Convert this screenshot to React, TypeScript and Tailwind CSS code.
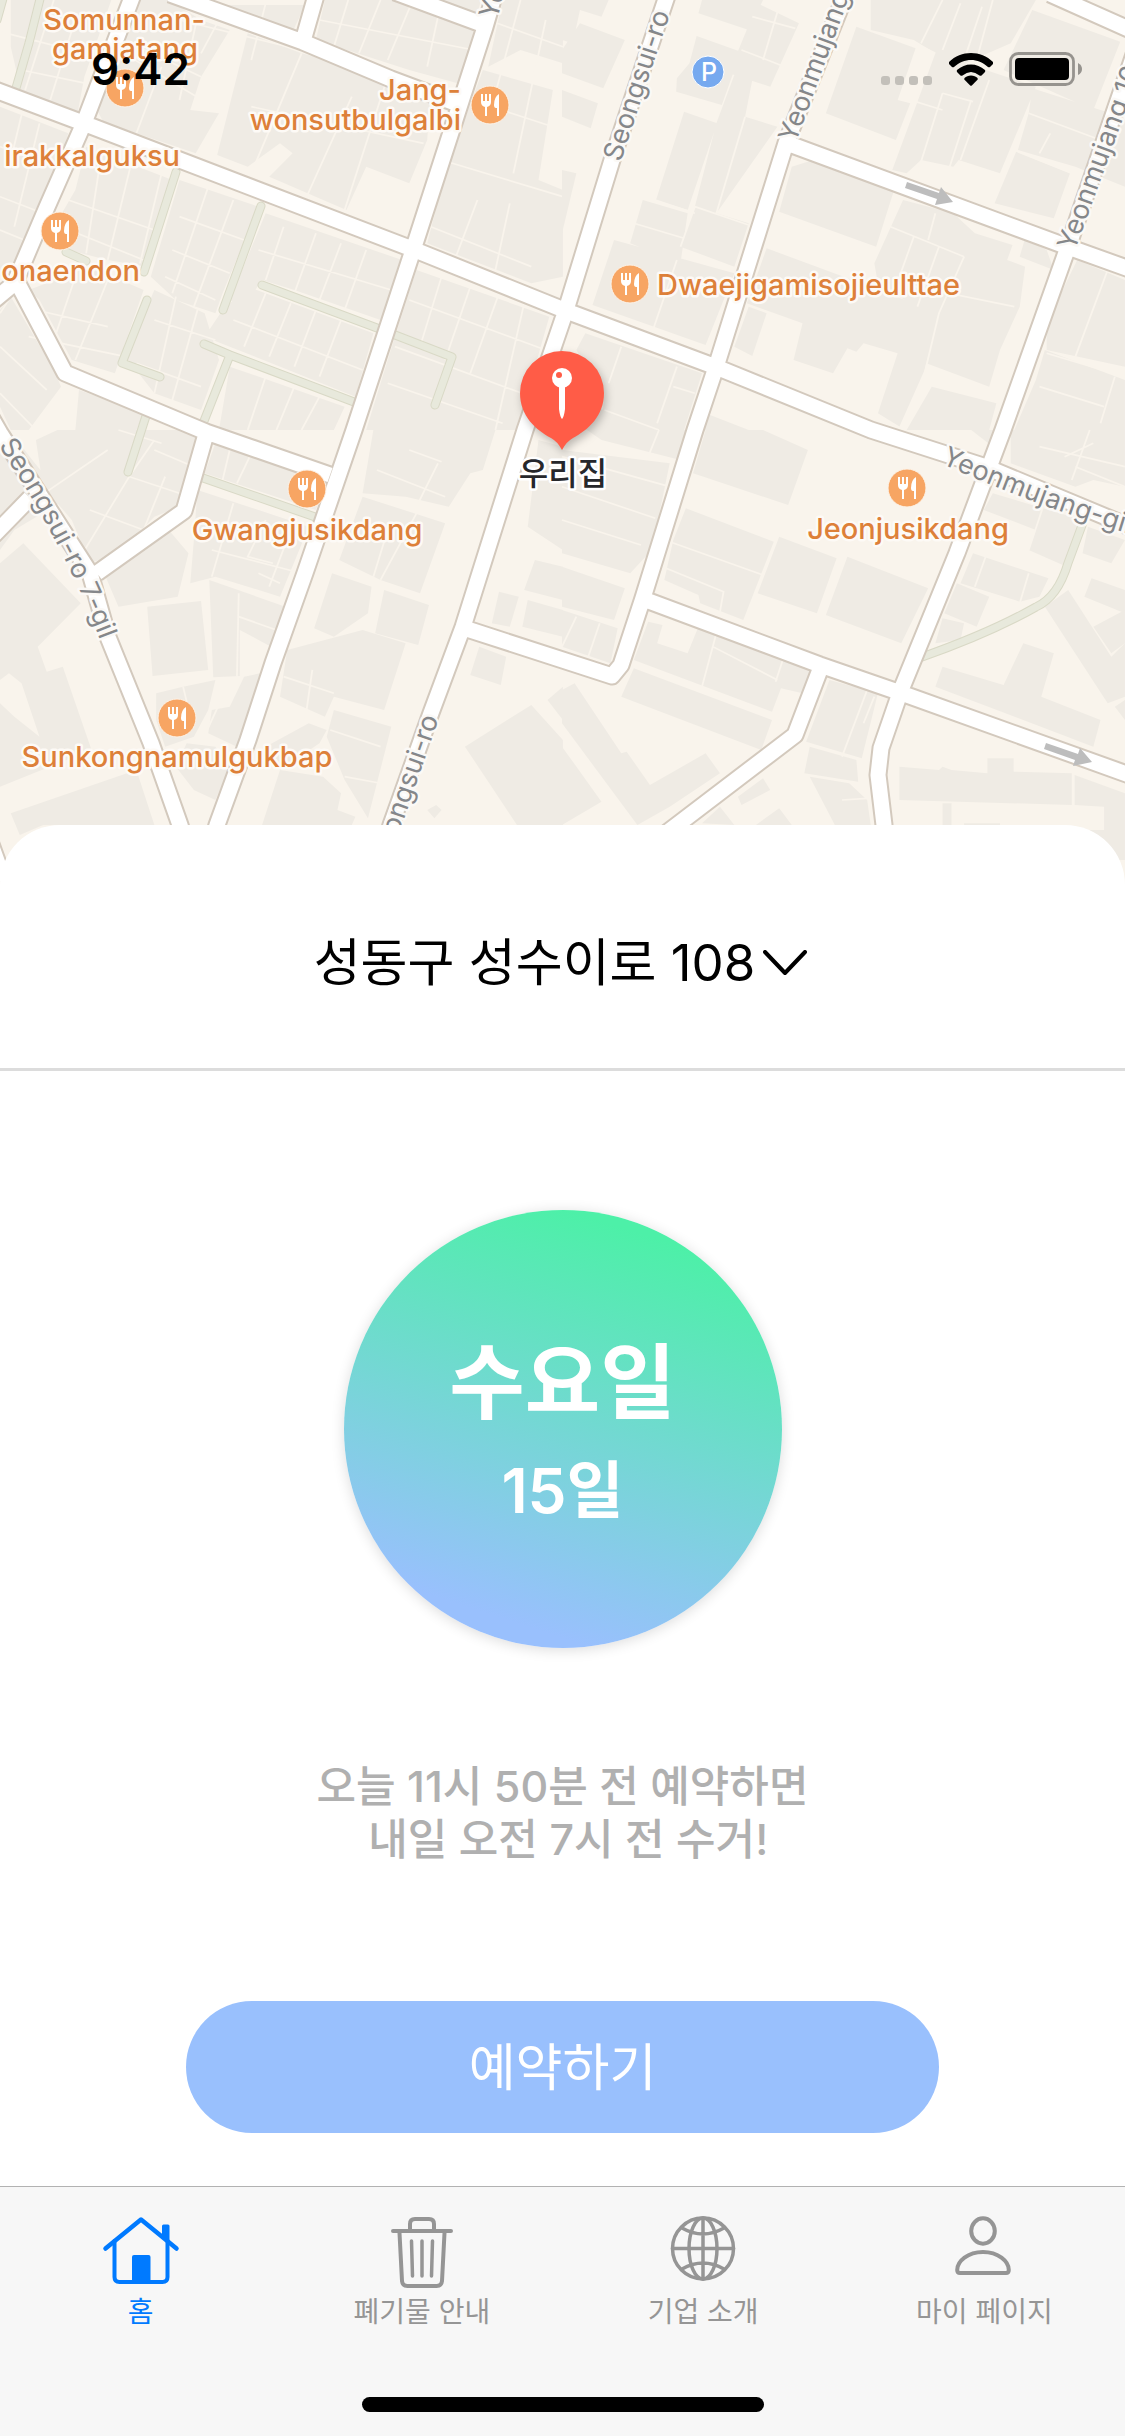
import type { ReactNode } from 'react';

/* ---------- map data ---------- */

const ROADS = [
  'M-10 88 L83 123 L415 250 L569 312 L716 367 L871 430 L986 467 L1135 529',
  'M170 -6 L303 42 L391 79 L463 106',
  'M317 -8 L303 41',
  'M395 -8 L487 26',
  'M497 -14 L485 27 L413 250 L354 430 L305 573 L273 663 L248 740 L217 825 L198 890',
  'M134 -8 L131 0 L84 123 L47 207 L16 280 L65 373 L206 432 L330 475',
  'M16 282 L-8 302',
  'M206 434 L184 511 L97 573',
  'M-12 412 L0 433 L90 573 L108 637 L151 743 L180 825 L200 890',
  'M30 498 L-10 539',
  'M669 -10 L612 160 L566 310 L525 430 L463 627 L431 713 L391 825 L372 890',
  'M849 -14 L786 143 L716 367 L695 430 L643 598 L621 665 L612 676 L467 629',
  'M792 145 L1068 247 L1135 271',
  'M1050 -6 L1135 32',
  'M1150 8 L1068 247 L1003 430 L957 553 L901 690 L881 748 L878 775 L884 825 L890 890',
  'M646 600 L820 665 L901 693 L1135 777',
  'M821 667 L795 735 L677 825 L610 876',
  'M-12 836 L4 880',
];

const ALLEYS = [
  'M41 -5 L29 43 L16 88',
  'M4 -5 L-3 20',
  'M176 172 L144 272',
  'M261 206 L223 310',
  'M262 285 L377 328 L452 357 L435 405',
  'M204 344 L230 355 L354 402',
  'M230 355 L204 421',
  'M147 300 L122 363 L160 377',
  'M66 252 L86 261',
  'M146 416 L128 472',
  'M203 478 L318 518',
  'M1084 520 L1068 563 Q1058 597 1036 607 Q990 633 922 657',
];

const BLOCKS_NW = [
  'M30 0H310L235 230L215 345L60 280L30 140Z',
  'M0 320L190 400L170 480L60 760L0 830V560Z',
  'M385 0H470L560 60L640 90L560 230L530 330L610 340L545 460L380 400L290 370L270 330Z',
  'M500 15H850L815 95Z',
  'M905 0H1340L1320 80L1310 260L1140 210L880 120Z',
  'M690 100L840 160L1200 260L1190 420L1140 550L1020 500L965 630L750 530L815 460L780 430L690 500L605 465Z',
  'M1400 0H1568V190L1450 150L1360 200Z',
  'M1345 210L1540 270L1500 540L1568 570V830L1480 850L1190 730L1240 520Z',
  'M240 440L480 540L445 630L410 800L300 780L190 750L140 700L210 570Z',
  'M500 540L720 620L620 880L600 940L490 900L420 830Z',
  'M740 640L1120 780L1060 960L820 870L730 840L680 920L640 900Z',
  'M690 860L1040 1000L990 1190L640 1040L570 1010L620 930Z',
  'M80 870L250 800L400 870L320 1120L200 1080L110 900Z',
  'M430 870L570 940L610 1080L560 1230L430 1180L350 1070Z',
  'M1160 810L1530 950L1440 1290H1020L1100 1010Z',
  'M0 930L30 890L150 1110L170 1160L80 1290H30L0 1220Z',
  'M640 1100L960 1220L930 1290H610Z',
  'M220 1170L400 1240L380 1290H210Z',
];

const GAPS_NW = [
  'M70 270L150 0M140 300L215 40M60 210L240 250M0 95L270 170',
  'M0 440L150 500M0 590L120 640M0 690L90 730M60 345L30 480M110 370L40 680',
  'M560 0L500 300M385 140L560 230M360 170L610 330M450 200L380 400',
  'M500 60L840 150M640 0L560 160M740 10L700 180M970 0L930 140M1060 0L1000 160M1150 0L1080 180M1230 0L1190 200M890 60L1320 150',
  'M840 160L700 520M980 290L850 600M1080 230L960 630M700 320L1180 430',
  'M1450 0L1370 320M1360 60L1568 140M1340 310L1568 390M1520 60L1430 520M1230 480L1568 590M1330 600L1270 770M1420 610L1380 810M1200 680L1480 800',
  'M290 410L240 760M370 470L300 780M450 520L390 790M190 600L430 690M170 680L400 780',
  'M580 560L480 880M650 600L540 920M500 650L680 720M480 750L640 820M460 830L600 900',
  'M880 700L820 880M950 730L890 900M1020 750L960 930M720 750L1090 870M790 680L740 840',
  'M740 880L680 1040M810 910L750 1070M880 930L820 1100M950 960L890 1130M650 960L1010 1110',
  'M100 930L300 980M80 1010L350 1070M210 830L150 1020M300 840L210 1080',
  'M430 960L600 1020M490 890L430 1180M550 930L480 1200M380 1090L560 1160',
  'M1230 830L1170 1040M1310 860L1240 1080M1390 880L1310 1120M1460 910L1380 1290M1140 900L1520 1050M1100 1040L1480 1190M1080 1150L1400 1270',
  'M0 1040L130 1170M0 1180L100 1290M30 890L0 940',
  'M740 1130L690 1290M820 1160L770 1290M890 1190L840 1290',
];

const BLOCKS_NE = [
  'M0 0H130L110 50L50 30L30 130L0 120ZM50 70L175 120L115 265L0 220V150Z',
  'M390 0H560L520 90L380 40ZM545 10L660 70L580 260L465 220Z',
  'M375 108L498 155L445 315L318 275L320 235L355 190Z',
  'M340 335L432 370L350 630L262 600ZM480 225L530 240L510 350L600 380L430 640L520 670L480 800L330 740L370 620L430 370Z',
  'M225 600L350 640L330 790L190 730Z',
  'M145 720L480 820L400 1035L85 915Z',
  'M0 270L100 310L80 385L0 350ZM0 510L40 520L0 700Z',
  'M820 80L985 145L935 300L970 310L930 420L735 340Z',
  'M860 0H1320L1250 130L1100 200L980 120L860 90Z',
  'M1040 160L1320 260L1220 520L1105 480L1090 500L1000 480L960 520L920 510Z',
  'M1310 30L1555 125L1480 330L1230 210Z',
  'M1310 265L1500 330L1568 350V560L1430 500L1270 450L1300 340Z',
  'M1265 455L1415 520L1370 655L1205 610Z',
  'M700 480L925 570L875 740L605 635L640 500Z',
  'M950 600L1090 640L1150 700L1255 735L1240 780L1290 800L1275 920L1220 1050L1190 1160L1015 1090L1045 960L880 850L870 790Z',
  'M570 745L860 860L1050 940L1010 1110L940 1280L880 1240L935 1060L840 1030L820 1055L795 1045L755 1120L645 1080L670 970L515 910Z',
  'M520 920L570 940L530 1068L480 1040Z',
  'M65 1000L390 1120L340 1290H110L118 1180L40 1050Z',
  'M1290 715L1350 750L1370 810L1275 770Z',
  'M1435 780L1568 840V1100L1350 1050L1350 970Z',
  'M1345 1050L1568 1140V1290H1260L1320 1140Z',
  'M1030 1160L1210 1210L1190 1290H960Z',
  'M0 1200L280 1270V1290H0Z',
  'M400 1240L520 1290H390Z',
];

const GAPS_NE = [
  'M530 50L650 85M500 150L620 200M610 0L560 180',
  'M370 620L520 675M370 620L330 740M200 670L340 715M320 780L255 985M510 350L430 640M260 600L370 640',
  'M985 130L1040 160M1060 0L1000 130M1110 10L1060 150M1170 20L1120 180M1200 0L1150 200',
  'M1060 280L990 520M1140 300L1080 500M1190 240L1110 480M1060 280L1145 305M940 290L1060 330',
  'M1270 455L1420 520M1300 340L1500 420M1360 400L1330 460',
  'M915 680L1120 770M980 710L920 890M1050 740L990 920M1120 770L1050 940M1050 940L1010 1120M940 850L1260 920M1040 640L1020 720',
  'M165 1040L130 1150M320 1100L265 1270M118 1230L270 1290M310 1160L370 1180',
  'M1520 810L1430 1070M1540 1130L1500 1270M1330 1160L1510 1220M1350 1060L1568 1130',
];

const BLOCKS_SW = [
  'M100 30L160 0H500L560 20L500 230L430 260L330 370L250 400L200 270L120 170Z',
  'M0 60L40 20L90 90L180 210L40 300L0 360Z',
  'M65 340L225 520L105 650L130 725L175 710L255 960L0 1070V820L40 860L110 920L60 760L25 730L0 750V400Z',
  'M600 40L910 140L880 240L570 130Z',
  'M550 180L860 290L780 500L600 440L530 460L540 330Z',
  'M470 300L525 370L495 500L330 530L290 430Z',
  'M410 530L560 513L580 720L425 738ZM583 450L795 530L755 650L668 600V738L594 742Z',
  'M435 790L510 770L600 750L580 840L540 920L460 950L435 870Z',
  'M640 830L680 740L725 730L660 950L580 910L590 840Z',
  'M30 1150L380 1020L430 1185H120L55 1215Z',
  'M1040 0H1380L1345 120L1310 130L1250 230L1130 200L1010 190Z',
  'M1010 200L1240 280L1170 490L1060 450L945 390Z',
  'M925 430L1035 470L1025 550L930 620L875 595ZM1070 480L1195 525L1165 645L1045 610Z',
  'M1010 600L1130 640L1070 840L930 800L905 860L780 800L800 660Z',
  'M930 840L1090 890L1025 1165L960 1050L910 920Z',
  'M780 1020L900 1040L950 1090L940 1140L990 1160L980 1185H730Z',
  'M860 880L910 900L890 940L780 1020L740 950Z',
  'M1480 825L1568 930V1185H1440L1295 950ZM1568 770L1525 810L1568 870Z',
  'M1335 650L1410 680L1395 765L1310 735Z',
  'M1500 30L1568 50V510L1460 480L1490 390L1568 410V360L1470 290Z',
  'M1390 485L1445 500L1420 590L1370 580ZM1470 510L1568 540V620L1455 590Z',
  'M520 940L600 950L640 1010L600 1110L540 1080L490 1010Z',
  'M1215 1125L1230 1140L1210 1165L1190 1140Z',
];

const GAPS_SW = [
  'M300 60L110 200M360 140L230 370M430 30L360 140L500 190M430 60L540 110M330 0L450 40M250 240L400 300M460 140L400 300',
  'M700 70L660 160M640 60L620 150M590 360L840 430M740 270L690 380L760 400M650 220L590 440M720 430L780 460M810 300L750 470',
  'M665 560L770 600M665 490L660 740M620 800L560 940M510 770L530 860',
  'M1220 100L1160 230M1140 60L1230 95M1080 300L1040 440M1160 250L1060 450M1050 120L1240 200',
  'M960 1040L1060 1060M920 900L1060 950M790 740L930 790M870 720L850 870',
];

const BLOCKS_SE = [
  'M0 60L300 100L250 360L190 430L0 370Z',
  'M0 410L175 475L145 570L0 530ZM0 540L155 595L135 700L0 650Z',
  'M70 0H345L330 90L110 30ZM400 0H560L685 60L630 225L365 130Z',
  'M345 235L590 335L505 570L385 520L380 495L285 450L310 330Z',
  'M605 320L765 385L710 550L545 490ZM795 380L1020 475L945 640L735 555Z',
  'M240 575L280 585L265 640L350 670L380 590L430 610L695 715L670 790L610 775L585 845L200 690Z',
  'M200 715L585 870L555 960L165 800Z',
  'M745 750L880 790L835 985L680 935Z',
  'M690 950L820 990L825 1055L675 1030ZM690 1040L800 1060L850 1110L860 1185H760Z',
  'M35 760L165 970L180 965L245 1065L400 970L440 1030L300 1130L210 1185L0 880V780Z',
  'M0 950L110 1115L0 1185Z',
  'M1140 0H1240L1200 50ZM1250 0H1568V170L1480 150L1430 170L1250 100Z',
  'M1200 190L1450 270L1395 405L1300 360L1320 300L1175 240Z',
  'M1145 370L1355 445L1330 500L1275 515L1110 460ZM1100 460L1190 500L1155 590L1065 550ZM1060 565L1120 580L1110 630L1040 640Z',
  'M1060 710L1230 765L1285 640L1370 670L1335 800L1500 870L1480 950L1040 770Z',
  'M1410 480L1530 680L1568 640V800L1520 820L1345 530Z',
  'M1475 445L1568 480V550L1455 500ZM1465 290L1568 330L1530 400L1450 370Z',
  'M1480 590L1568 540V640L1530 670ZM1540 830L1568 810V870Z',
  'M940 1010L1050 1020L1060 1010L1085 1020L1185 1030V985H1258V1025L1420 1030V1125L940 1110Z',
  'M1428 1035L1568 1090V1290H1510V1130L1428 1125ZM1060 1120H1085V1185H1060Z',
  'M490 1100L560 1045L580 1080L500 1125ZM390 1180L440 1130L480 1185ZM540 1185L605 1135L640 1185Z',
  'M1120 1180H1220V1185H1120ZM1470 1200H1568V1290H1540Z',
];

const GAPS_SE = [
  'M0 170L260 265M0 270L220 345M270 0L240 80M0 80L300 170',
  'M300 335L560 435M290 415L450 485L440 545M420 650L600 750M430 610L390 770M615 690L595 755M40 560L0 650M105 580L70 690',
  'M850 780L780 980M870 800L840 880M1180 380L1150 470M1300 430L1275 520M780 1110L850 1105M1340 230L1300 360',
  'M1470 0L1420 150M1430 110L1568 170M1330 50L1568 110M1480 40L1400 80',
];

const POIS = [
  { x: 125, y: 88 }, { x: 490, y: 105 }, { x: 60, y: 231 }, { x: 630, y: 284 },
  { x: 307, y: 489 }, { x: 177, y: 718 }, { x: 907, y: 488 },
];

const POI_LABELS: { text: string; x: number; y: number; anchor: 'start' | 'middle' | 'end' }[] = [
  { text: 'Somunnan-', x: 124, y: 30, anchor: 'middle' },
  { text: 'gamjatang', x: 125, y: 59, anchor: 'middle' },
  { text: 'irakkalguksu', x: 180, y: 166, anchor: 'end' },
  { text: 'onaendon', x: 140, y: 281, anchor: 'end' },
  { text: 'Jang-', x: 461, y: 100, anchor: 'end' },
  { text: 'wonsutbulgalbi', x: 461, y: 130, anchor: 'end' },
  { text: 'Dwaejigamisojieulttae', x: 657, y: 295, anchor: 'start' },
  { text: 'Gwangjusikdang', x: 307, y: 540, anchor: 'middle' },
  { text: 'Sunkongnamulgukbap', x: 177, y: 767, anchor: 'middle' },
  { text: 'Jeonjusikdang', x: 908, y: 539, anchor: 'middle' },
];

const STREETS = [
  { id: 'st-1', text: 'Seongsui-ro', d: 'M613 160 L674 -24' },
  { id: 'st-2', text: 'Yeonmujang', d: 'M788 141 L880 -110' },
  { id: 'st-3', text: 'Yeonmujang 10-gil', d: 'M1067 249 L1152 16' },
  { id: 'st-4', text: 'Yeonmujang-gil', d: 'M489 18 L542 -160' },
  { id: 'st-5', text: 'Yeonmujang-gil', d: 'M944 456 Q1060 508 1180 540' },
  { id: 'st-6', text: 'Seongsui-ro 7-gil', d: 'M5 441 Q94 575 128 700' },
  { id: 'st-7', text: 'Seongsui-ro', d: 'M380 864 L442 685' },
];

function Tile({ x, y, blocks, gaps }: { x: number; y: number; blocks: string[]; gaps: string[] }) {
  return (
    <g transform={`translate(${x} ${y}) scale(0.359 0.3333)`}>
      <path d={blocks.join('')} fill="#efebe4" />
      <path d={gaps.join('')} fill="none" stroke="#f9f4ec" strokeWidth="5" />
    </g>
  );
}

function CityMap() {
  return (
    <svg
      viewBox="0 0 1125 885"
      preserveAspectRatio="xMidYMid slice"
      className="block h-[885px] w-full bg-[#f9f4ec]"
      role="img"
      aria-label="지도"
    >
      <Tile x={0} y={0} blocks={BLOCKS_NW} gaps={GAPS_NW} />
      <Tile x={562} y={0} blocks={BLOCKS_NE} gaps={GAPS_NE} />
      <Tile x={0} y={430} blocks={BLOCKS_SW} gaps={GAPS_SW} />
      <Tile x={562} y={430} blocks={BLOCKS_SE} gaps={GAPS_SE} />

      <g fill="none" strokeLinecap="round" strokeLinejoin="round">
        <path d={ALLEYS.join('')} stroke="#d9d9c6" strokeWidth="9" />
        <path d={ALLEYS.join('')} stroke="#e8e9dc" strokeWidth="7" />
      </g>
      <g fill="none" strokeLinejoin="round">
        <path d={ROADS.join('')} stroke="#d3c9bd" strokeWidth="19" />
        <path d={ROADS.join('')} stroke="#ffffff" strokeWidth="15" />
      </g>

      <g fill="#bdbdbd">
        <path d="M907 182L939 193L941 187L953 202L935 205L937 199L905 188Z" />
        <path d="M1046 743L1078 754L1080 748L1092 762L1073 766L1075 760L1044 749Z" />
      </g>

      <g
        fill="#85878a"
        stroke="#fbf9f6"
        strokeWidth="5"
        strokeLinejoin="round"
        paintOrder="stroke"
        className="text-[27px]"
      >
        {STREETS.map((s) => (
          <g key={s.id}>
            <path id={s.id} d={s.d} fill="none" stroke="none" />
            <text dy="8">
              <textPath href={`#${s.id}`}>{s.text}</textPath>
            </text>
          </g>
        ))}
      </g>

      {POIS.map((p) => (
        <g key={`${p.x}-${p.y}`} transform={`translate(${p.x} ${p.y})`}>
          <circle r="19" fill="#f7a563" stroke="#fdf3e8" strokeWidth="1" />
          <path
            d="M-9 -11V-3Q-9 1 -5 2V11H-3V2Q1 1 1 -3V-11H-1V-4H-3V-11H-5V-4H-7V-11ZM9 -11Q4 -8 4 0Q4 3 6 3H7V11H9Z"
            fill="#fff"
          />
        </g>
      ))}
      <circle cx="708" cy="72" r="16" fill="#76a9ef" stroke="#fff" strokeWidth="1" />
      <text x="709" y="81" textAnchor="middle" fill="#fff" className="text-[25px] font-medium">P</text>

      <g
        fill="#dd8039"
        stroke="#fdfaf6"
        strokeWidth="5"
        strokeLinejoin="round"
        paintOrder="stroke"
        className="text-[29px] font-medium"
      >
        {POI_LABELS.map((l) => (
          <text key={l.text} x={l.x} y={l.y} textAnchor={l.anchor}>{l.text}</text>
        ))}
      </g>

      <g>
        <path
          d="M562 351A42 42 0 0 1 604 393C604 416 588 430 573 438Q567 441 562 450Q557 441 551 438C536 430 520 416 520 393A42 42 0 0 1 562 351Z"
          fill="#ff5c47"
          className="drop-shadow-[2px_4px_4px_rgba(0,0,0,0.25)]"
        />
        <path d="M559 386H565V409Q564 417 562 419Q560 417 559 409Z" fill="#fff" />
        <circle cx="562" cy="378" r="10" fill="#fff" />
        <circle cx="559" cy="375" r="3" fill="#ff5c47" />
        <text
          x="563"
          y="485"
          textAnchor="middle"
          fill="#26272b"
          stroke="#fff"
          strokeWidth="5"
          strokeLinejoin="round"
          paintOrder="stroke"
          className="text-[32px] font-medium"
        >
          우리집
        </text>
      </g>
    </svg>
  );
}

/* ---------- status bar ---------- */

function StatusBar() {
  return (
    <div className="absolute inset-x-0 top-0 flex h-[138px] items-center justify-between pr-[43px] pl-[91px]">
      <time className="text-[44px] leading-none font-semibold text-black">9:42</time>
      <div className="flex items-center gap-4">
        <svg viewBox="0 0 52 34" className="h-[34px] w-[52px]" fill="#c3c0ba" aria-hidden="true">
          <rect x="0" y="24" width="9" height="9" rx="3" />
          <rect x="14" y="24" width="9" height="9" rx="3" />
          <rect x="28" y="24" width="9" height="9" rx="3" />
          <rect x="42" y="24" width="9" height="9" rx="3" />
        </svg>
        <svg viewBox="0 0 44 33" className="h-[33px] w-11" aria-label="Wi-Fi">
          <path d="M22 0C30 0 38 3 44 9Q44.500 10 44 11L41 14Q40 14.500 39 14C34 9.500 28 7 22 7S10 9.500 5 14Q4 14.500 3 14L0 11Q-0.500 10 0 9C6 3 14 0 22 0Z" />
          <path d="M22 11.500C27 11.500 32 13.500 36 17Q36.500 18 36 19L32.500 22.500Q31.500 23 30.500 22.500Q22 15.500 13.500 22.500Q12.500 23 11.500 22.500L8 19Q7.500 18 8 17C12 13.500 17 11.500 22 11.500Z" />
          <path d="M22 22.500C24.500 22.500 27 23.500 28.500 25Q29 26 28.500 26.800L22.800 32.500Q22 33 21.200 32.500L15.500 26.800Q15 26 15.500 25C17 23.500 19.500 22.500 22 22.500Z" />
        </svg>
        <svg viewBox="0 0 73 34" className="h-[34px] w-[73px]" aria-label="배터리">
          <rect x="1.500" y="1.500" width="63" height="31" rx="8" fill="none" stroke="#96938e" strokeWidth="2.800" />
          <rect x="6" y="6" width="54" height="22" rx="4" />
          <path d="M69 11Q73 13 73 17T69 23Z" fill="#96938e" />
        </svg>
      </div>
    </div>
  );
}

/* ---------- tab bar ---------- */

function TabIcon({ children }: { children: ReactNode }) {
  return (
    <svg
      viewBox="0 0 80 76"
      className="h-[76px] w-20"
      fill="none"
      stroke="currentColor"
      strokeWidth="4"
      strokeLinecap="round"
      strokeLinejoin="round"
      aria-hidden="true"
    >
      {children}
    </svg>
  );
}

const TABS = [
  {
    label: '홈',
    href: '#home',
    active: true,
    icon: (
      <TabIcon>
        <path d="M4.500 34.500L40 5.500L75.500 34.500" strokeWidth="4.500" />
        <path d="M13.500 27V63Q13.500 68 18.500 68H61.500Q66.500 68 66.500 63V27" />
        <path d="M31 68V43Q31 41 33 41H47.500Q49.500 41 49.500 43V68Z" fill="currentColor" stroke="none" />
        <path d="M61 22V12Q61 10.500 62.500 10.500H67Q68.500 10.500 68.500 12V29Z" fill="currentColor" stroke="none" />
      </TabIcon>
    ),
  },
  {
    label: '폐기물 안내',
    href: '#waste',
    active: false,
    icon: (
      <TabIcon>
        <path d="M11 17H69M28 16V10Q28 5 33 5H47Q52 5 52 10V16" />
        <path d="M17.500 19L20 67Q20.500 72 25.500 72H54.500Q59.500 72 60 67L62.500 19" />
        <path d="M29.500 27L30.500 62M40 27V62M50.500 27L49.500 62" strokeWidth="3.500" />
      </TabIcon>
    ),
  },
  {
    label: '기업 소개',
    href: '#company',
    active: false,
    icon: (
      <TabIcon>
        <g strokeWidth="3.500">
          <circle cx="40" cy="34.500" r="30.500" />
          <ellipse cx="40" cy="34.500" rx="14" ry="30.500" />
          <path d="M40 4V65M9.500 34.500H70.500M19 14Q40 26 61 14M19 55Q40 43 61 55" />
        </g>
      </TabIcon>
    ),
  },
  {
    label: '마이 페이지',
    href: '#my',
    active: false,
    icon: (
      <TabIcon>
        <ellipse cx="39" cy="17" rx="11.800" ry="12.700" />
        <path d="M13.200 56C13.200 47 24 38 39 38S64.800 47 64.800 56Q64.800 59 62 59H16Q13.200 59 13.200 56Z" />
      </TabIcon>
    ),
  },
];

function TabBar() {
  return (
    <nav className="flex flex-col items-center border-t border-[#b2b2b2] bg-[#f7f7f7] pt-[27px] pb-6">
      <ul className="grid w-full grid-cols-4">
        {TABS.map((tab) => (
          <li key={tab.label}>
            <a
              href={tab.href}
              aria-current={tab.active ? 'page' : undefined}
              className={`flex flex-col items-center gap-1 text-[28px] leading-9 ${
                tab.active ? 'text-[#007aff]' : 'text-[#959595]'
              }`}
            >
              {tab.icon}
              {tab.label}
            </a>
          </li>
        ))}
      </ul>
      <div className="mt-[67px] h-[15px] w-[402px] rounded-full bg-black" />
    </nav>
  );
}

/* ---------- screen ---------- */

export default function App() {
  return (
    <div className="flex min-h-screen flex-col bg-white font-['Inter','Noto_Sans_CJK_KR',sans-serif]">
      <header className="relative">
        <CityMap />
        <StatusBar />
      </header>

      <main className="relative -mt-[60px] flex flex-1 flex-col items-center rounded-t-[60px] bg-white">
        <div className="flex w-full justify-center border-b-[3px] border-[#dcdcdc] pt-[102px] pb-[69px]">
          <button type="button" className="flex items-center gap-2 pr-1 text-[51px] leading-[72px] text-black">
            성동구 성수이로 108
            <svg
              viewBox="0 0 44 26"
              className="h-[26px] w-11"
              fill="none"
              stroke="currentColor"
              strokeWidth="4"
              strokeLinecap="round"
              strokeLinejoin="round"
              aria-hidden="true"
            >
              <path d="M2 2L22 23L42 2" />
            </svg>
          </button>
        </div>

        <section className="mt-[139px] flex size-[438px] flex-col items-center justify-center rounded-full bg-[linear-gradient(198deg,#4df0a8_12%,#99c0fd_86%)] pt-1 font-bold text-white shadow-[0_2px_14px_rgba(0,0,0,0.14)]">
          <h1 className="text-[82px] leading-[120px]">수요일</h1>
          <p className="text-[62px] leading-[96px] font-semibold">15일</p>
        </section>

        <p className="mt-28 text-center text-[43px] leading-[53px] font-medium whitespace-pre text-[#b0b0b0]">
          {'오늘 11시 50분 전 예약하면\n 내일 오전 7시 전 수거!'}
        </p>

        <button
          type="button"
          className="mt-[135px] mb-[53px] h-[132px] w-[67%] rounded-full bg-[#99c0fd] text-[51px] leading-none text-white"
        >
          예약하기
        </button>
      </main>

      <TabBar />
    </div>
  );
}
